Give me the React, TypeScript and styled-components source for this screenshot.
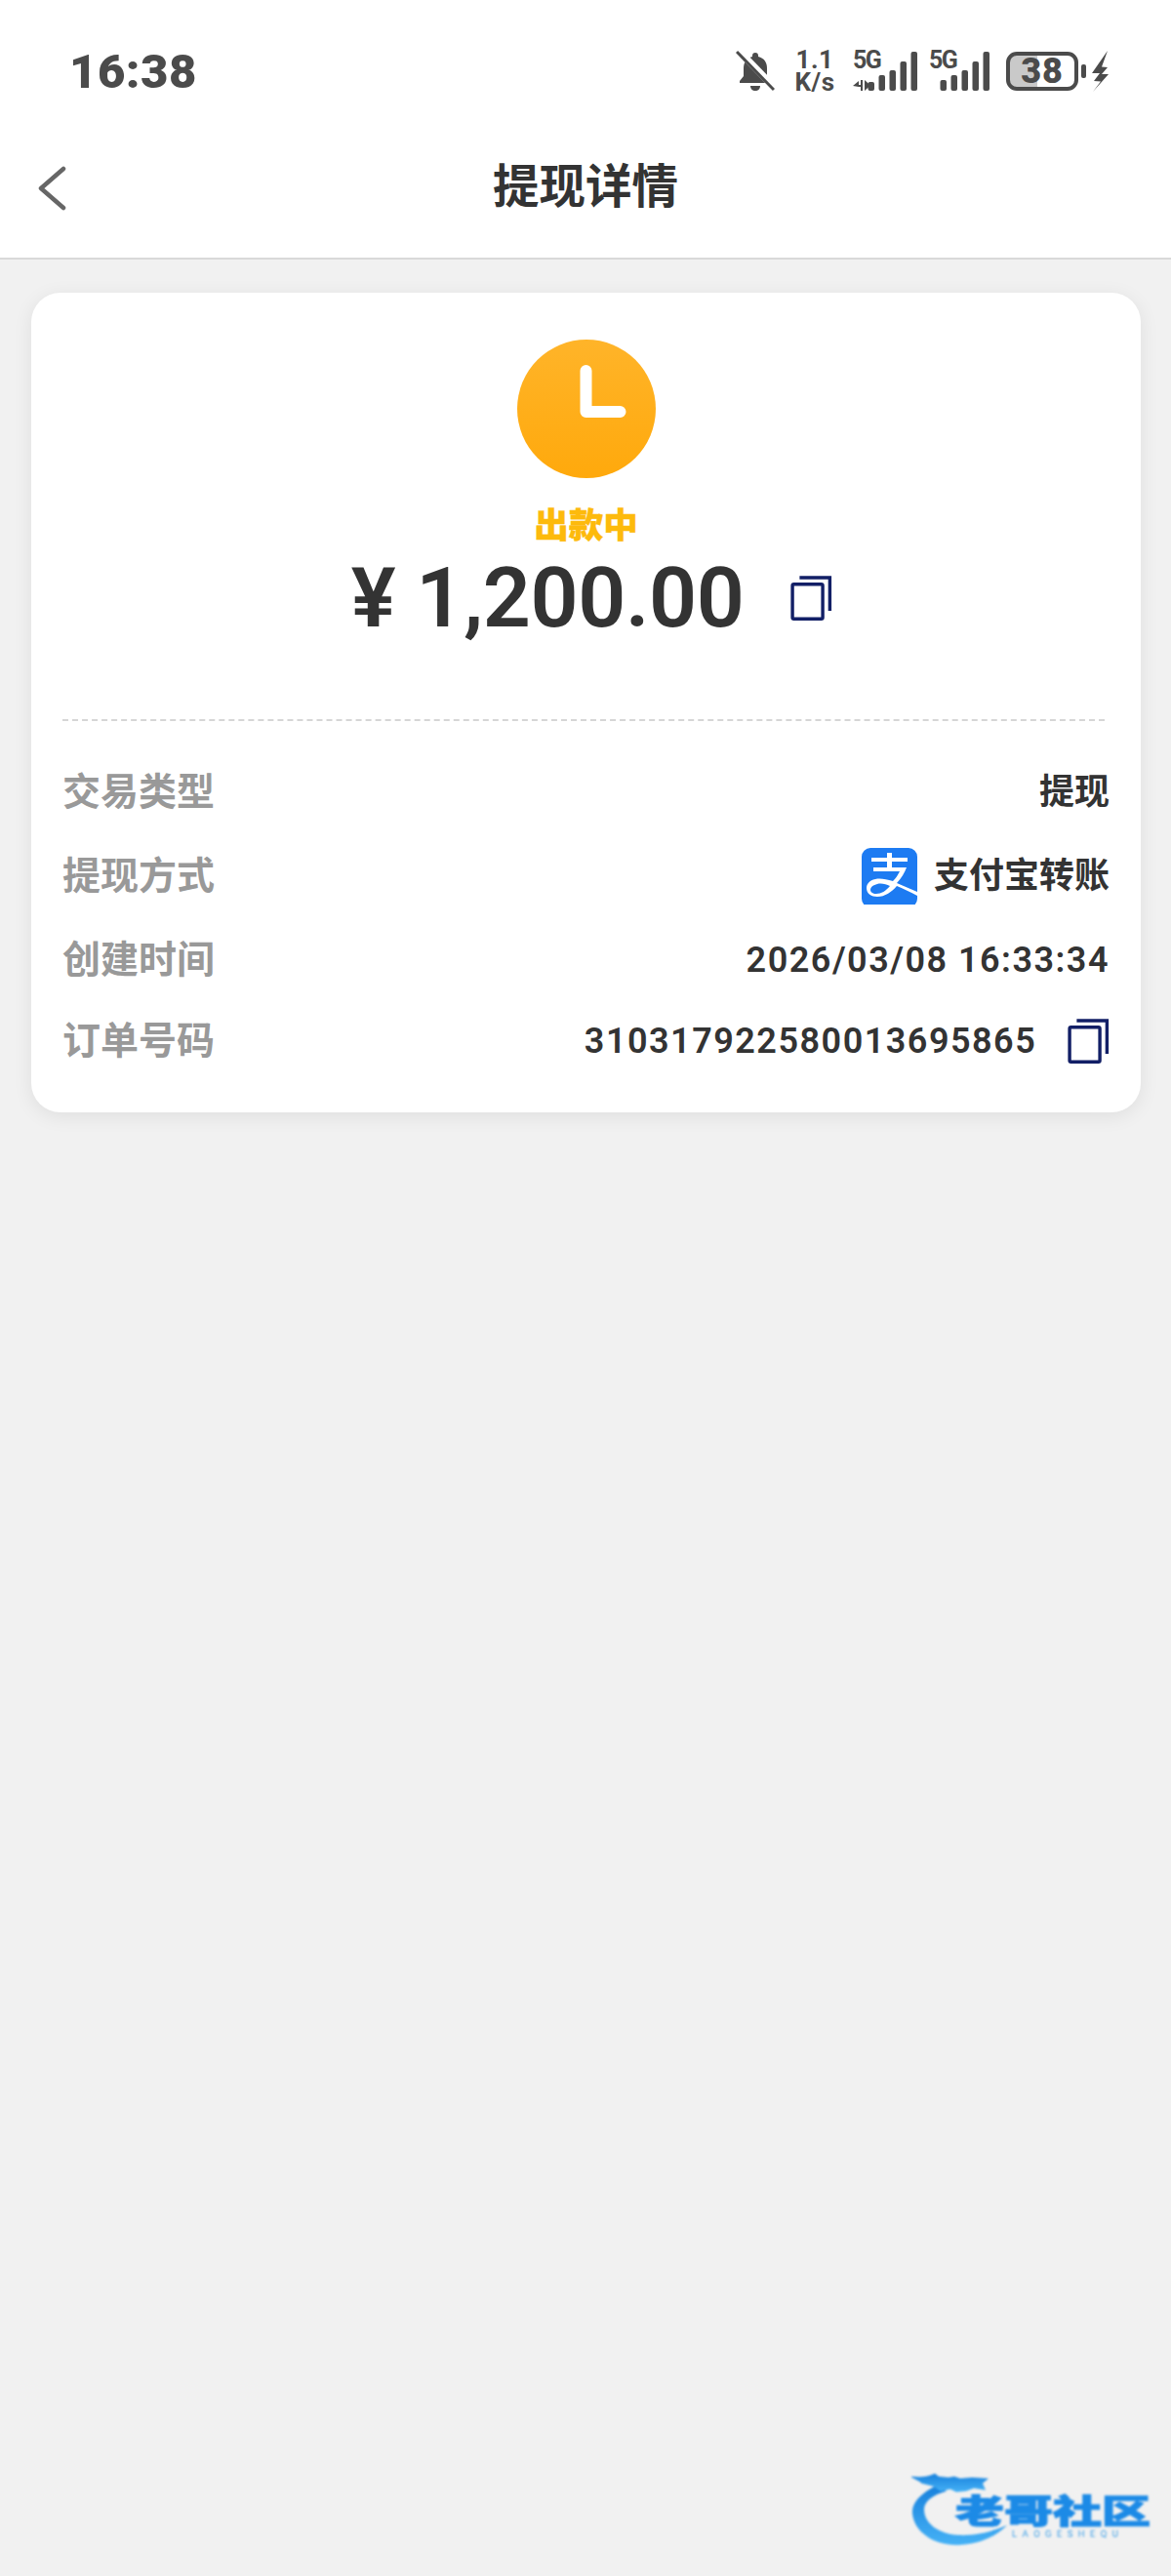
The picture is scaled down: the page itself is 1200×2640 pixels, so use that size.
import styled, { createGlobalStyle } from 'styled-components';

const GlobalStyle = createGlobalStyle`
    html, body {
        margin: 0;
        padding: 0;
        background: #f1f1f1;
    }
    * {
        box-sizing: border-box;
    }
`

const SANS = `Roboto, "Noto Sans CJK SC", "Liberation Sans", sans-serif`

const Page = styled.div`
    position: relative;
    width: 1200px;
    height: 2640px;
    overflow: hidden;
    background: #f1f1f1;
    font-family: ${SANS};
`

const Top = styled.header`
    background: #fff;
    border-bottom: 2px solid #d9d9d9;
    height: 266px;
`

const StatusBar = styled.div`
    height: 146px;
    padding: 0 64px 0 71px;
    display: flex;
    align-items: center;
    justify-content: space-between;
    color: #4b4b4b;
`

const Time = styled.div`
    font-size: 49px;
    font-weight: 900;
    letter-spacing: 0.5px;
    line-height: 1;
`

const StatusIcons = styled.div`
    display: flex;
    align-items: center;
`

const NetSpeed = styled.div`
    width: 46px;
    margin-left: 18px;
    text-align: center;
    font-size: 26px;
    font-weight: 700;
    line-height: 23px;
    letter-spacing: 0.5px;
    white-space: nowrap;
`

const Signal = styled.div<{ $first?: boolean }>`
    position: relative;
    width: ${p => (p.$first ? 66 : 62)}px;
    height: 40px;
    margin-left: ${p => (p.$first ? 16 : 12)}px;
    svg {
        display: block;
    }
`

const SignalLabel = styled.span`
    position: absolute;
    left: 0;
    top: -4px;
    font-size: 25px;
    font-weight: 700;
    line-height: 26px;
    letter-spacing: -1.5px;
`

const Battery = styled.div`
    position: relative;
    width: 74px;
    height: 40px;
    margin-left: 17px;
    border: 4px solid #4b4b4b;
    border-radius: 11px;
    overflow: hidden;
    display: flex;
    align-items: center;
    justify-content: center;
    font-size: 36px;
    font-weight: 900;
    letter-spacing: 1px;
    background: linear-gradient(90deg, #c9c9c9 42%, #fff 42%);
`

const BatteryNub = styled.div`
    width: 5px;
    height: 14px;
    margin-left: 3px;
    border-radius: 2px;
    background: #4b4b4b;
`

const Bolt = styled.svg`
    display: block;
    margin-left: 6px;
`

const NavBar = styled.div`
    position: relative;
    height: 118px;
    margin-top: -12px;
    display: flex;
    align-items: center;
    justify-content: center;
`

const BackIcon = styled.svg`
    position: absolute;
    left: 38px;
    top: 36px;
`

const Title = styled.h1`
    margin: 0;
    font-size: 47.5px;
    font-weight: 700;
    line-height: 1;
    color: #333;
`

const Card = styled.section`
    margin: 34px 31px 0 32px;
    height: 840px;
    padding: 48px 32px 0;
    border-radius: 30px;
    background: #fff;
    box-shadow: 0 4px 20px rgba(0, 0, 0, 0.08);
`

const Summary = styled.div`
    display: flex;
    flex-direction: column;
    align-items: center;
    height: 391px;
    border-bottom: 2px dashed #d6d6d6;
    margin-right: 5px;
`

const ClockIcon = styled.svg`
    display: block;
    flex: none;
    margin-right: -5px;
`

const StatusText = styled.div`
    margin-top: 27px;
    margin-right: -5px;
    font-size: 35.5px;
    font-weight: 900;
    line-height: 44px;
    color: #fdba0c;
    -webkit-text-stroke: 0.4px #fdba0c;
`

const AmountRow = styled.div`
    display: flex;
    align-items: center;
    gap: 48px;
    margin-top: 2px;
    margin-left: 17px;
`

const Amount = styled.div`
    font-size: 86px;
    font-weight: 600;
    line-height: 100px;
    letter-spacing: -0.4px;
    color: #333;
    white-space: nowrap;
`

const Rows = styled.div`
    display: flex;
    flex-direction: column;
    gap: 34px;
    margin-top: 50px;
`

const Row = styled.div`
    display: flex;
    align-items: center;
    justify-content: space-between;
    min-height: 46px;
    &:last-child {
        margin-top: 3px;
    }
`

const Label = styled.div`
    font-size: 39px;
    font-weight: 700;
    line-height: 46px;
    color: #999;
`

const Value = styled.div<{ $numeric?: boolean }>`
    display: flex;
    align-items: center;
    font-size: 36px;
    font-weight: ${p => (p.$numeric ? 600 : 700)};
    letter-spacing: ${p => (p.$numeric ? '1.5px' : '0')};
    line-height: 46px;
    color: #333;
    white-space: nowrap;
`

const PayLogo = styled.svg`
    display: block;
    margin-right: 17px;
`

const RowCopy = styled.svg`
    display: block;
    margin-left: 32px;
`

const Watermark = styled.div`
    position: absolute;
    left: 934px;
    top: 2530px;
    width: 250px;
    height: 82px;
    filter: blur(0.8px);
`

const WatermarkName = styled.div`
    position: absolute;
    left: 45px;
    top: 28px;
    font-size: 50px;
    font-weight: 900;
    line-height: 32px;
    white-space: nowrap;
    color: #1c8ae6;
    -webkit-text-stroke: 1.6px #1c8ae6;
    transform: scaleY(0.68);
`

const WatermarkSub = styled.div`
    position: absolute;
    left: 103px;
    top: 62px;
    font-size: 9.5px;
    line-height: 10px;
    letter-spacing: 5.4px;
    color: #3a9fe8;
    white-space: nowrap;
`

const Swoosh = styled.svg`
    position: absolute;
    left: 0;
    top: 0;
`

function CopyIcon({ size = 46, as: Comp }: { size?: number; as?: typeof RowCopy }) {
    const Svg = Comp ?? 'svg'
    const w = size * 0.93
    return (
        <Svg width={w} height={size} viewBox="0 0 42 46" fill="none" stroke="#121f66" strokeWidth="3.4">
            <rect x="1.7" y="8.7" width="31" height="35.6" rx="1.5" />
            <path d="M9 2h31v34" />
        </Svg>
    )
}

function SignalBars({ bars, width, arrows }: { bars: number[]; width: number; arrows?: boolean }) {
    return (
        <svg width={width} height="40" viewBox={`0 0 ${width} 40`} fill="#4b4b4b">
            {arrows && <path d="M0 35l6-5v4h2v-5h2v11H8v-4H6v0zM12 29l6 5.500-6 5.500z" />}
            {bars.map((h, i) => (
                <rect key={i} x={width - 6.5 - (bars.length - 1 - i) * 11} y={40 - h} width="6.5" height={h} rx="2" />
            ))}
        </svg>
    )
}

function App() {
    return (
        <Page>
            <GlobalStyle />
            <Top>
                <StatusBar>
                    <Time>16:38</Time>
                    <StatusIcons>
                        <svg width="40" height="44" viewBox="0 0 40 44">
                            <path d="M20 3c2 0 3 1 3 3v1c6 1.5 9 6 9 12v8l4 5v2H4v-2l4-5v-8c0-6 3-10.500 9-12V6c0-2 1-3 3-3z" fill="#4b4b4b" />
                            <path d="M15 37h10c0 3-2 5-5 5s-5-2-5-5z" fill="#4b4b4b" />
                            <path d="M3 1l38 39" stroke="#fff" strokeWidth="7" />
                            <path d="M1 2l38 39" stroke="#4b4b4b" strokeWidth="3" />
                        </svg>
                        <NetSpeed>
                            1.1
                            <br />
                            K/s
                        </NetSpeed>
                        <Signal $first>
                            <SignalLabel>5G</SignalLabel>
                            <SignalBars bars={[9, 16, 21, 30, 40]} width={66} arrows />
                        </Signal>
                        <Signal>
                            <SignalLabel>5G</SignalLabel>
                            <SignalBars bars={[11, 16, 21, 30, 40]} width={62} />
                        </Signal>
                        <Battery>38</Battery>
                        <BatteryNub />
                        <Bolt width="17" height="42" viewBox="0 0 17 42" fill="#4b4b4b">
                            <path d="M16 0L0 23h8L2 31l7 .5L1 42 17 24h-7l6-7-6-.5z" />
                        </Bolt>
                    </StatusIcons>
                </StatusBar>
                <NavBar>
                    <BackIcon width="32" height="46" viewBox="0 0 32 46" fill="none" stroke="#666" strokeWidth="4.500" strokeLinecap="round" strokeLinejoin="round">
                        <path d="M27 3L4 23l23 20" />
                    </BackIcon>
                    <Title>提现详情</Title>
                </NavBar>
            </Top>
            <Card>
                <Summary>
                    <ClockIcon width="142" height="142" viewBox="0 0 142 142">
                        <defs>
                            <linearGradient id="clockFill" x1="0" y1="0" x2="0" y2="1">
                                <stop offset="0" stopColor="#ffb429" />
                                <stop offset="1" stopColor="#ffa90c" />
                            </linearGradient>
                        </defs>
                        <circle cx="71" cy="71" r="71" fill="url(#clockFill)" />
                        <path d="M70.500 32v42h35" fill="none" stroke="#fff" strokeWidth="12" strokeLinecap="round" strokeLinejoin="round" />
                    </ClockIcon>
                    <StatusText>出款中</StatusText>
                    <AmountRow>
                        <Amount>¥ 1,200.00</Amount>
                        <CopyIcon size={46} />
                    </AmountRow>
                </Summary>
                <Rows>
                    <Row>
                        <Label>交易类型</Label>
                        <Value>提现</Value>
                    </Row>
                    <Row>
                        <Label>提现方式</Label>
                        <Value>
                            <PayLogo width="57" height="58" viewBox="0 0 57 58">
                                <path d="M9 0h39a9 9 0 0 1 9 9v36L36 36c5-5 8-11 10-16H31v-6h16v-4H31V5h-5v5H10v4h16v6H12v4h27c-2 4-4 7-7 10-7-2-13-3-18-2-6 1-9 5-9 9 0 6 5 9 11 9 8 0 15-5 20-11 7 3 14 6 21 10v3a9 9 0 0 1-9 9H9a9 9 0 0 1-9-9V9a9 9 0 0 1 9-9zM16 37c4-1 9 0 13 2-4 5-9 8-14 8-4 0-6-2-6-4 0-3 3-5 7-6z" fill="#1d7bf2" fillRule="evenodd" />
                            </PayLogo>
                            支付宝转账
                        </Value>
                    </Row>
                    <Row>
                        <Label>创建时间</Label>
                        <Value $numeric>2026/03/08 16:33:34</Value>
                    </Row>
                    <Row>
                        <Label>订单号码</Label>
                        <Value $numeric>
                            310317922580013695865
                            <CopyIcon size={46} as={RowCopy} />
                        </Value>
                    </Row>
                </Rows>
            </Card>
            <Watermark>
                <Swoosh width="250" height="82" viewBox="0 0 250 82">
                    <defs>
                        <linearGradient id="swooshFill" x1="0" y1="0" x2="0" y2="1">
                            <stop offset="0" stopColor="#1780dc" />
                            <stop offset="1" stopColor="#46b2f6" />
                        </linearGradient>
                    </defs>
                    <path d="M26 17C8 26 0 36 1 46c2 20 24 34 50 32 20-1 36-9 47-20-14 6-32 11-50 10C28 67 13 56 13 42c0-8 8-15 23-19z" fill="url(#swooshFill)" />
                    <path d="M-1 8c10 1 16 1 25-3l4 3 10 1 6-1 6 2 12-1 17 1-6 5 3 7-12-2-8 3-10 1-6-3-10 2-8-5-12-3C10 13 3 11-1 8z" fill="url(#swooshFill)" />
                </Swoosh>
                <WatermarkName>老哥社区</WatermarkName>
                <WatermarkSub>LAOGESHEQU</WatermarkSub>
            </Watermark>
        </Page>
    )
}

export default App
